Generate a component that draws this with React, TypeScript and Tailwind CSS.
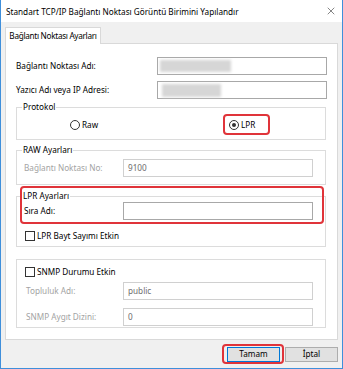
import { X } from "lucide-react";

const font = { fontFamily: '"Noto Sans", "Open Sans", sans-serif' };

function Radio({ checked }: { checked?: boolean }) {
  return (
    <span className="flex h-[10px] w-[10px] items-center justify-center rounded-full border border-[#333] bg-white">
      {checked && <span className="h-[4px] w-[4px] rounded-full bg-[#333]" />}
    </span>
  );
}

function Check() {
  return <span className="block h-[10px] w-[10px] border border-[#333] bg-white" />;
}

function Legend({ children }: { children: string }) {
  return <legend className="ml-[5px] px-[1px] text-[8.2px] leading-[12px] text-black">{children}</legend>;
}

export default function App() {
  return (
    <div
      style={font}
      className="flex h-[369px] w-[343px] flex-col border-x border-b border-[#3f8fdb] bg-[#f0f0f0] text-[8.2px] text-black"
    >
      {/* title bar */}
      <div className="flex h-[22px] shrink-0 items-center justify-between bg-white pl-[5px] pr-[5px]">
        <span className="pt-[2px]">Standart TCP/IP Bağlantı Noktası Görüntü Birimini Yapılandır</span>
        <X className="h-[12px] w-[12px] text-[#333]" strokeWidth={1.2} />
      </div>

      {/* tab strip */}
      <div className="mt-[5px] flex pl-[4px]">
        <div className="relative z-10 -mb-px flex h-[17px] w-[96px] items-center justify-center whitespace-nowrap border border-b-0 border-[#d9d9d9] bg-white tracking-[-0.3px]">
          Bağlantı Noktası Ayarları
        </div>
      </div>

      {/* tab page */}
      <div className="relative mx-[4px] h-[297px] border border-[#d9d9d9] bg-white px-[10px] pt-[13px]">
        <div className="flex h-[18px] items-center">
          <span className="w-[141px]">Bağlantı Noktası Adı:</span>
          <div className="relative h-[18px] w-[170px] border border-[#a8a8a8]">
            <div className="absolute left-[2px] top-[2px] h-[12px] w-[71px] bg-[#d6d6d6] blur-[1.5px]" />
          </div>
        </div>
        <div className="mt-[6px] flex h-[18px] items-center">
          <span className="w-[141px]">Yazıcı Adı veya IP Adresi:</span>
          <div className="relative h-[18px] w-[170px] border border-[#a8a8a8]">
            <div className="absolute left-[4px] top-[2px] h-[13px] w-[59px] bg-[#d6d6d6] blur-[1.5px]" />
          </div>
        </div>

        {/* Protokol */}
        <fieldset className="mt-[2px] h-[39px] w-[310px] border border-[#dcdcdc]">
          <Legend>Protokol</Legend>
          <div className="mt-[6px] flex items-center pl-[53px]">
            <div className="flex w-[159px] items-center gap-[2px]">
              <Radio />
              <span>Raw</span>
            </div>
            <div className="flex items-center gap-[2px]">
              <Radio checked />
              <span>LPR</span>
            </div>
          </div>
        </fieldset>

        {/* RAW Ayarları */}
        <fieldset className="mt-[4px] h-[41px] w-[310px] border border-[#dcdcdc]">
          <Legend>RAW Ayarları</Legend>
          <div className="mt-[3px] flex h-[18px] items-center pl-[7px]">
            <span className="w-[99px] text-[#a3a3a3]">Bağlantı Noktası No:</span>
            <div className="flex h-[18px] w-[190px] items-center border border-[#d0d0d0] pl-[4px] text-[#6d6d6d]">
              9100
            </div>
          </div>
        </fieldset>

        {/* LPR Ayarları */}
        <fieldset className="mt-[5px] h-[57px] w-[310px] border border-[#dcdcdc]">
          <Legend>LPR Ayarları</Legend>
          <div className="flex h-[18px] items-center pl-[7px]">
            <span className="w-[99px]">Sıra Adı:</span>
            <div className="h-[18px] w-[190px] border border-[#a8a8a8]" />
          </div>
          <div className="mt-[10px] flex items-center gap-[2px] pl-[8px]">
            <Check />
            <span>LPR Bayt Sayımı Etkin</span>
          </div>
        </fieldset>

        {/* SNMP */}
        <div className="mt-[12px] w-[310px] border border-[#dcdcdc] pb-[1px] pt-[6px]">
          <div className="flex items-center gap-[2px] pl-[8px]">
            <Check />
            <span>SNMP Durumu Etkin</span>
          </div>
          <div className="mt-[4px] flex h-[18px] items-center pl-[9px]">
            <span className="w-[97px] text-[#a3a3a3]">Topluluk Adı:</span>
            <div className="flex h-[18px] w-[190px] items-center border border-[#d0d0d0] pl-[4px] text-[#6d6d6d]">
              public
            </div>
          </div>
          <div className="mt-[8px] flex h-[18px] items-center pl-[9px]">
            <span className="w-[97px] text-[#a3a3a3]">SNMP Aygıt Dizini:</span>
            <div className="flex h-[18px] w-[190px] items-center border border-[#d0d0d0] pl-[4px] text-[#6d6d6d]">
              0
            </div>
          </div>
        </div>

        {/* highlight boxes */}
        <div className="absolute left-[217px] top-[70px] h-[21px] w-[47px] rounded-[4px] border-2 border-[#e0343a]" />
        <div className="absolute left-[14px] top-[142px] h-[38px] w-[304px] rounded-[4px] border-2 border-[#e0343a]" />
      </div>

      {/* buttons */}
      <div className="mt-[7px] flex justify-end gap-[5px] pr-[4px]">
        <div className="relative">
          <button className="flex h-[15px] w-[53px] items-center justify-center border border-[#0078d7] bg-[#e1e1e1]">
            Tamam
          </button>
          <div className="absolute -left-[5px] -top-[3px] h-[20px] w-[62px] rounded-[4px] border-2 border-[#e0343a]" />
        </div>
        <button className="flex h-[15px] w-[53px] items-center justify-center border border-[#adadad] bg-[#e1e1e1]">
          İptal
        </button>
      </div>
    </div>
  );
}
